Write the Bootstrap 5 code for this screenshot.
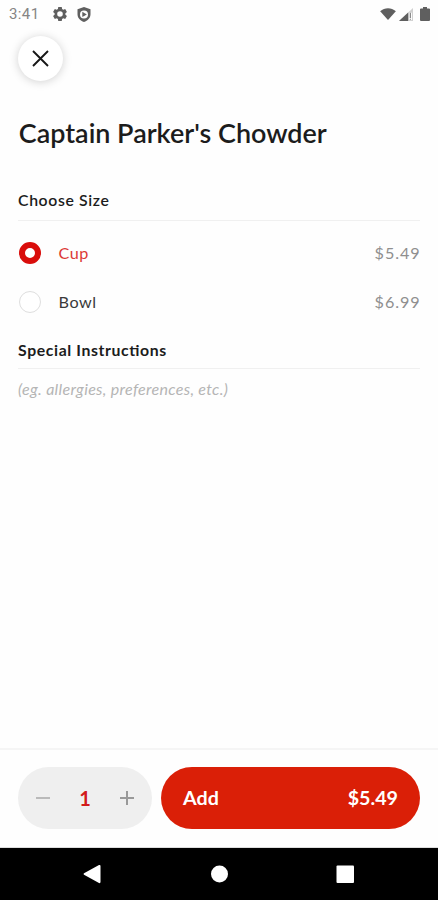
<!DOCTYPE html>
<html lang="en">
<head>
<meta charset="utf-8">
<meta name="viewport" content="width=device-width, initial-scale=1">
<title>Captain Parker's Chowder</title>
<link href="https://cdn.jsdelivr.net/npm/bootstrap@5.3.0/dist/css/bootstrap.min.css" rel="stylesheet">
<style>
body{font-family:Lato,"Liberation Sans",sans-serif;color:#1c1c1c;background:#fefefe;height:900px;overflow:hidden}
svg{display:block;flex:none}
.status{height:28px;padding:0 8px 0 9px;color:#5f5f5f}
.clock{font:15px/28px Roboto,sans-serif;color:#858585;width:44px;letter-spacing:.4px}
.shield{margin-left:10px}
.signal{margin-left:3px}
.battery{margin-left:7px}
.page-body{padding:8px 18px 0}
.close-btn{width:45px;height:45px;background:#fff;border:0;box-shadow:0 1px 10px rgba(0,0,0,.18)}
.dish{font-size:26.950px;line-height:34px;font-weight:600;margin:35px 0 40px .8px;white-space:nowrap}
.section-head{font-size:15.8px;line-height:20px;font-weight:600;margin:0;letter-spacing:.63px;font-feature-settings:"liga" 1}
.section-head.notes-head{font-weight:700;letter-spacing:.62px}
.rule{height:1px;background:#f0f0f0;margin-top:10px}
.notes-head + .rule{margin-top:8px}
.choices{padding-top:7px;margin-bottom:14px}
.choice{height:49px;font-size:16.2px;line-height:24px;letter-spacing:.55px}
.dot{width:22px;height:22px;border:1px solid #dedede;background:#fff;margin:1px 18px 0 .5px}
.dot.on{border:6px solid #d90d0b}
.red{color:#dc3a36}
.bowl{color:#3a3a3a}
.price{color:#8f8f8f;letter-spacing:.9px;margin-right:-.5px}
.note{font-size:16px;line-height:22px;color:#b5b5b5;font-style:italic;letter-spacing:.31px;margin-top:9px}
.order-bar{height:100px;border-top:2px solid #f5f5f5;padding:17px 18px 0;gap:9px;border-bottom:1px solid #ddd}
.stepper{width:134px;height:62px;background:#efefef;padding:0 17px}
.count{font-size:20px;color:#d21b1b}
.add-btn{height:62px;background:#da1f07;color:#fff;padding:0 22px;border:0;font-size:19.700px;font-weight:700}
.system-nav{height:52px}
</style>
</head>
<body class="d-flex flex-column">
<header class="status d-flex align-items-center">
  <span class="clock">3:41</span>
  <svg width="14" height="14" viewBox="2 2 20 20"><path fill="currentColor" fill-rule="evenodd" d="M9.5 2h5l.5 2.800 1.700 1 2.700-1 2.500 4.300-2.200 1.900v2l2.200 1.900-2.500 4.300-2.700-1-1.700 1-.5 2.800h-5L9 19.200l-1.700-1-2.700 1-2.500-4.300L4.300 13v-2L2.100 9.100l2.500-4.300 2.700 1 1.700-1zM12 8a4 4 0 1 0 0 8 4 4 0 0 0 0-8z"/></svg>
  <svg class="shield" width="14" height="15" viewBox="0 0 14 15"><path fill="currentColor" fill-rule="evenodd" d="M7 0l6.500 2.300v5C13.500 11 10.700 14 7 15 3.300 14 .5 11 .5 7.300v-5zM7 3.400a4 4 0 1 0 0 8 4 4 0 0 0 0-8z"/><path fill="currentColor" d="M5.300 4.800l4.500 2.600-4.500 2.600z"/></svg>
  <div class="d-flex align-items-center ms-auto">
    <svg width="16" height="12" viewBox="0 0 17 13"><path fill="currentColor" d="M0 3.500C5-.8 12-.8 17 3.500L8.500 13z"/></svg>
    <svg class="signal" width="14" height="13" viewBox="0 0 13 14" preserveAspectRatio="none"><path fill="#d0d0d0" d="M13 0v14H0z"/><path fill="currentColor" d="M8.500 4.800V14H0z"/><path fill="#fff" d="M9.300 5h2.700v8H9.300z"/><path fill="#777" d="M10 5h1v6h-1zM10 12h1v1h-1z"/></svg>
    <svg class="battery" width="10" height="14" viewBox="0 0 10 15" preserveAspectRatio="none"><path fill="currentColor" d="M3 0h4v1.500h2q1 0 1 1V14q0 1-1 1H1q-1 0-1-1V2.500q0-1 1-1h2z"/></svg>
  </div>
</header>
<main class="page-body flex-grow-1">
  <button class="close-btn rounded-circle d-flex align-items-center justify-content-center p-0" aria-label="Close">
    <svg width="17" height="17" viewBox="0 0 17 17"><path stroke="#171717" stroke-width="1.900" d="M1 1l15 15M16 1L1 16"/></svg>
  </button>
  <h1 class="dish">Captain Parker's Chowder</h1>
  <h2 class="section-head">Choose Size</h2>
  <div class="rule"></div>
  <div class="choices">
    <div class="choice d-flex align-items-center"><span class="dot on rounded-circle"></span><span class="red">Cup</span><span class="price ms-auto">$5.49</span></div>
    <div class="choice d-flex align-items-center"><span class="dot rounded-circle"></span><span class="bowl">Bowl</span><span class="price ms-auto">$6.99</span></div>
  </div>
  <h2 class="section-head notes-head">Special Instructions</h2>
  <div class="rule"></div>
  <div class="note">(eg. allergies, preferences, etc.)</div>
</main>
<section class="order-bar d-flex">
  <div class="stepper rounded-pill d-flex align-items-center justify-content-between">
    <svg width="16" height="16" viewBox="0 0 16 16"><path stroke="#bababa" stroke-width="2" d="M1 8h14"/></svg>
    <span class="count fw-bold">1</span>
    <svg width="16" height="16" viewBox="0 0 16 16"><path stroke="#999" stroke-width="2" d="M1 8h14M8 1v14"/></svg>
  </div>
  <button class="add-btn rounded-pill flex-grow-1 d-flex align-items-center justify-content-between"><span>Add</span><span>$5.49</span></button>
</section>
<nav class="system-nav bg-black d-flex align-items-center">
  <svg width="438" height="52" viewBox="0 0 438 52" fill="#fff"><path d="M84 25.200L99 17q1.500-.5 1.500 1v16q0 1.500-1.500 1L84 26.800q-1-.8 0-1.600z"/><circle cx="219.500" cy="26" r="8.500"/><rect x="336.500" y="17.500" width="17.500" height="17.500" rx="1"/></svg>
</nav>
<script src="https://cdn.jsdelivr.net/npm/bootstrap@5.3.0/dist/js/bootstrap.bundle.min.js"></script>
</body>
</html>
